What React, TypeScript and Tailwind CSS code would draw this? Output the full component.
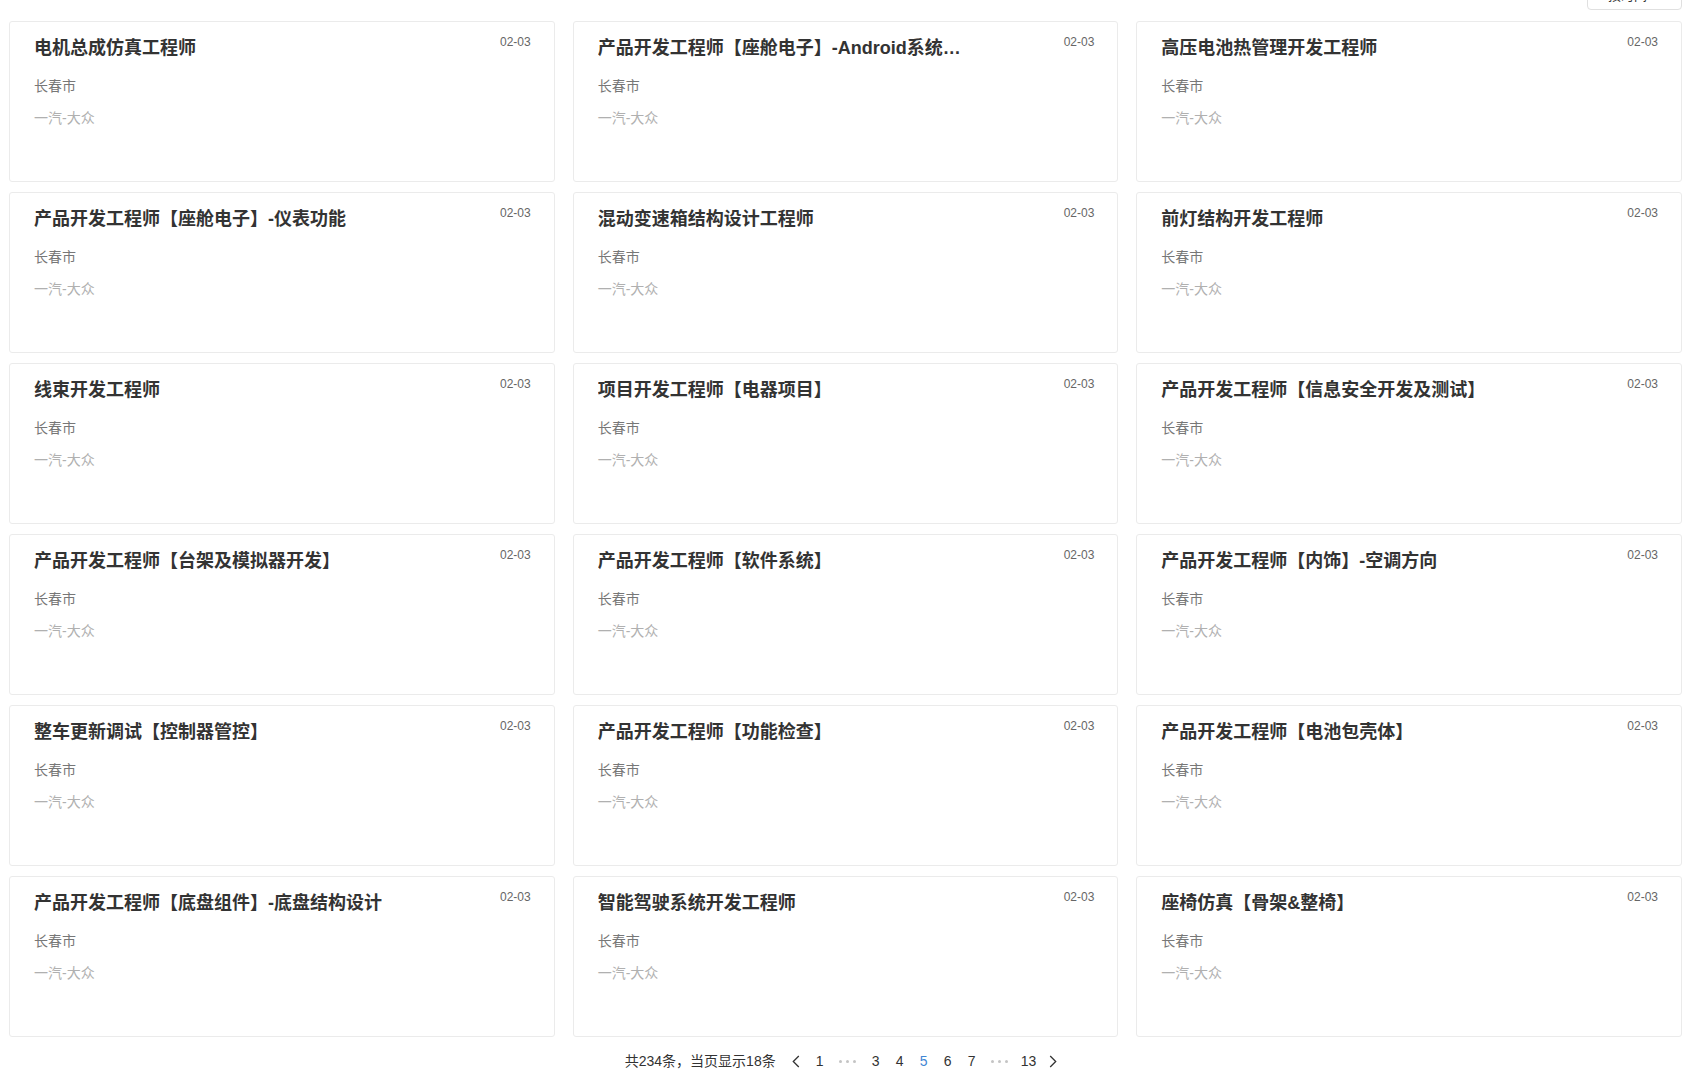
import React from "react";

const jobs: string[] = [
  "电机总成仿真工程师",
  "产品开发工程师【座舱电子】-Android系统开发",
  "高压电池热管理开发工程师",
  "产品开发工程师【座舱电子】-仪表功能",
  "混动变速箱结构设计工程师",
  "前灯结构开发工程师",
  "线束开发工程师",
  "项目开发工程师【电器项目】",
  "产品开发工程师【信息安全开发及测试】",
  "产品开发工程师【台架及模拟器开发】",
  "产品开发工程师【软件系统】",
  "产品开发工程师【内饰】-空调方向",
  "整车更新调试【控制器管控】",
  "产品开发工程师【功能检查】",
  "产品开发工程师【电池包壳体】",
  "产品开发工程师【底盘组件】-底盘结构设计",
  "智能驾驶系统开发工程师",
  "座椅仿真【骨架&整椅】",
];

const FONT = { fontFamily: '"Liberation Sans", "Noto Sans CJK SC", sans-serif' };

function Card({ title }: { title: string }) {
  return (
    <div className="h-[161px] rounded-[3px] border border-[#ebebeb] bg-white pl-[24px] pr-[23px] pt-[12px]">
      <div className="flex items-start justify-between">
        <div className="mt-[2px] max-w-[370px] truncate text-[18px] font-bold leading-[24px] text-[#333333]">
          {title}
        </div>
        <div className="text-[12px] leading-[16px] text-[#666666]">02-03</div>
      </div>
      <div className="mt-[16px] text-[14px] leading-[20px] text-[#777777]">长春市</div>
      <div className="mt-[12px] text-[14px] leading-[20px] text-[#b0b0b0]">一汽-大众</div>
    </div>
  );
}

function Dots() {
  return (
    <div className="flex h-[20px] w-[32px] items-center justify-center gap-[4px]">
      <span className="h-[3px] w-[3px] rounded-full bg-[#c4c4c4]" />
      <span className="h-[3px] w-[3px] rounded-full bg-[#c4c4c4]" />
      <span className="h-[3px] w-[3px] rounded-full bg-[#c4c4c4]" />
    </div>
  );
}

function Page({ n, active }: { n: string; active?: boolean }) {
  return (
    <div
      className={
        "flex h-[20px] min-w-[24px] items-center justify-center px-[5px] text-[14px] leading-[20px] " +
        (active ? "text-[#3f86d4]" : "text-[#333333]")
      }
    >
      {n}
    </div>
  );
}

function Chevron({ dir }: { dir: "left" | "right" }) {
  return (
    <div className="flex h-[20px] w-[24px] items-center justify-center">
      <svg width="8" height="13" viewBox="0 0 8 13" fill="none">
        {dir === "left" ? (
          <path d="M6.8 1 L1.3 6.5 L6.8 12" stroke="#333" strokeWidth="1.3" />
        ) : (
          <path d="M1.2 1 L6.7 6.5 L1.2 12" stroke="#333" strokeWidth="1.3" />
        )}
      </svg>
    </div>
  );
}

export default function App() {
  return (
    <div className="min-h-[1076px] w-full overflow-hidden bg-white" style={FONT}>
      <div className="flex justify-end pr-[17px]">
        <div className="-mt-[18px] flex h-[28px] w-[95px] items-center justify-center gap-[6px] rounded-[4px] border border-[#e0e0e0] bg-white text-[13px] text-[#333333]">
          <span>按时间</span>
          <svg width="8" height="5" viewBox="0 0 8 5" fill="none">
            <path d="M0.5 0.5 L4 4 L7.5 0.5" stroke="#333" strokeWidth="1.2" />
          </svg>
        </div>
      </div>
      <div className="mt-[11px] grid grid-cols-3 gap-x-[18px] gap-y-[10px] pl-[9px] pr-[17px]">
        {jobs.map((t, i) => (
          <Card key={i} title={t} />
        ))}
      </div>
      <div className="mt-[14px] flex items-center justify-center pr-[9px]">
        <div className="mr-[8px] text-[14px] leading-[20px] text-[#333333]">共234条，当页显示18条</div>
        <Chevron dir="left" />
        <Page n="1" />
        <Dots />
        <Page n="3" />
        <Page n="4" />
        <Page n="5" active />
        <Page n="6" />
        <Page n="7" />
        <Dots />
        <Page n="13" />
        <Chevron dir="right" />
      </div>
    </div>
  );
}
